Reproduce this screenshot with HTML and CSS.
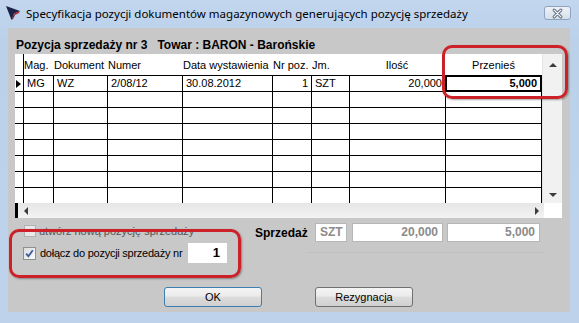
FILE: index.html
```html
<!DOCTYPE html>
<html lang="pl">
<head>
<meta charset="utf-8">
<title>Specyfikacja</title>
<link rel="stylesheet" href="styles.css">
</head>
<body>
<div class="window">
  <div class="titlebar">
    <svg class="app-icon" viewBox="0 0 16 16" width="16" height="16">
      <polygon points="1,1 15,6 9,8.5 6.5,15" fill="#1c2348"/>
      <polygon points="9,8.5 15,6 14,8 10,10" fill="#b3202a"/>
      <polygon points="9,8.5 6.5,15 8,14 10,10" fill="#7a1a2a"/>
    </svg>
    <span class="title">Specyfikacja pozycji dokumentów magazynowych generujących pozycję sprzedaży</span>
    <div class="close">
      <svg viewBox="0 0 26 13" width="26" height="13">
        <path d="M9.5 3 L16.5 10 M16.5 3 L9.5 10" stroke="#5d6b7d" stroke-width="3.2" stroke-linecap="round"/>
        <path d="M9.5 3 L16.5 10 M16.5 3 L9.5 10" stroke="#f4f6f9" stroke-width="1.4" stroke-linecap="round"/>
      </svg>
    </div>
  </div>
  <div class="client">
    <div class="caption">Pozycja sprzedaży nr 3&nbsp;&nbsp;&nbsp;Towar : BARON - Barońskie</div>
    <div class="grid">
      <div class="grid-main">
        <div class="cells">
          <div class="row head">
            <div class="c ind"></div>
            <div class="c mag">Mag.</div>
            <div class="c">Dokument</div>
            <div class="c">Numer</div>
            <div class="c">Data wystawienia</div>
            <div class="c">Nr poz.</div>
            <div class="c">Jm.</div>
            <div class="c center">Ilość</div>
            <div class="c center">Przenieś</div>
          </div>
          <div class="row data">
            <div class="c ind"><span class="pointer"></span></div>
            <div class="c">MG</div>
            <div class="c">WZ</div>
            <div class="c">2/08/12</div>
            <div class="c">30.08.2012</div>
            <div class="c right">1</div>
            <div class="c">SZT</div>
            <div class="c right">20,000</div>
            <div class="c right last focus">5,000</div>
          </div>
          <div class="row data"><div class="c ind"></div><div class="c"></div><div class="c"></div><div class="c"></div><div class="c"></div><div class="c"></div><div class="c"></div><div class="c"></div><div class="c last"></div></div>
          <div class="row data"><div class="c ind"></div><div class="c"></div><div class="c"></div><div class="c"></div><div class="c"></div><div class="c"></div><div class="c"></div><div class="c"></div><div class="c last"></div></div>
          <div class="row data"><div class="c ind"></div><div class="c"></div><div class="c"></div><div class="c"></div><div class="c"></div><div class="c"></div><div class="c"></div><div class="c"></div><div class="c last"></div></div>
          <div class="row data"><div class="c ind"></div><div class="c"></div><div class="c"></div><div class="c"></div><div class="c"></div><div class="c"></div><div class="c"></div><div class="c"></div><div class="c last"></div></div>
          <div class="row data"><div class="c ind"></div><div class="c"></div><div class="c"></div><div class="c"></div><div class="c"></div><div class="c"></div><div class="c"></div><div class="c"></div><div class="c last"></div></div>
          <div class="row data"><div class="c ind"></div><div class="c"></div><div class="c"></div><div class="c"></div><div class="c"></div><div class="c"></div><div class="c"></div><div class="c"></div><div class="c last"></div></div>
          <div class="row data"><div class="c ind"></div><div class="c"></div><div class="c"></div><div class="c"></div><div class="c"></div><div class="c"></div><div class="c"></div><div class="c"></div><div class="c last"></div></div>
        </div>
        <div class="vscroll">
          <span class="arrow up"></span>
          <span class="arrow down"></span>
        </div>
      </div>
      <div class="hscroll-row">
        <div class="hbar"></div>
        <div class="htrack">
          <span class="arrow left"></span>
          <span class="arrow rightarr"></span>
        </div>
        <div class="corner"></div>
      </div>
    </div>
    <div class="lower">
      <div class="options">
        <div class="opt opt1"><span class="cb disabled"></span><span class="opt-label">utwórz nową pozycję sprzedaży</span></div>
        <div class="opt opt2">
          <span class="cb checked">
            <svg viewBox="0 0 11 11" width="11" height="11"><path d="M2.2 5.6 L4.4 8.3 L8.8 2.2" fill="none" stroke="#3a5ba0" stroke-width="1.8"/></svg>
          </span>
          <span class="opt-label tight">dołącz do pozycji sprzedaży nr</span>
          <span class="num">1</span>
        </div>
      </div>
      <div class="summary">
        <div class="sum-row">
          <span class="sum-label">Sprzedaż</span>
          <span class="box b-jm">SZT</span>
          <span class="box b-q1">20,000</span>
          <span class="box b-q2">5,000</span>
        </div>
        <div class="sum-line"></div>
      </div>
    </div>
    <div class="buttons">
      <button class="btn default">OK</button>
      <button class="btn">Rezygnacja</button>
    </div>
  </div>
  <div class="highlight hl-top"></div>
  <div class="highlight hl-bottom"></div>
</div>
</body>
</html>
```

FILE: styles.css
```css
* { box-sizing: border-box; }
html, body { margin: 0; padding: 0; }
body {
  width: 579px;
  height: 323px;
  overflow: hidden;
  font-family: "Liberation Sans", Arial, sans-serif;
  font-size: 11px;
  color: #000;
  background: #bcd2ea;
}
.window {
  position: relative;
  width: 579px;
  height: 323px;
  background: linear-gradient(#c2d6ee, #bbd1ea 40px, #bed3eb);
  display: flex;
  flex-direction: column;
}
.titlebar {
  height: 28px;
  display: flex;
  align-items: center;
  padding: 0 8px 2px 5px;
}
.app-icon { flex: none; }
.title {
  margin-left: 5px;
  font-family: "Noto Sans", "Open Sans", sans-serif;
  font-size: 11.5px;
  color: #000;
  white-space: nowrap;
}
.close {
  margin-left: auto;
  width: 27px;
  height: 14px;
  border: 1px solid #8ea3bd;
  border-radius: 3px;
  background: linear-gradient(#eef2f7, #d6dfea);
  display: flex;
  align-items: center;
  justify-content: center;
}
.close svg { display: block; }
.client {
  margin: 0 9px 0 8px;
  height: 284px;
  background: #c8c8c8;
  padding-top: 10px;
}
.caption {
  height: 14px;
  line-height: 14px;
  padding-left: 8px;
  font-weight: bold;
  font-size: 12px;
  white-space: nowrap;
}
.grid {
  margin: 2px 0 0 7px;
  width: 547px;
  height: 164px;
  display: flex;
  flex-direction: column;
  background: #fff;
}
.grid-main { display: flex; height: 149px; }
.cells { width: 527px; }
.row {
  display: grid;
  grid-template-columns: 8px 30px 54px 75px 90px 39px 38px 96px 97px;
}
.c { white-space: nowrap; overflow: hidden; }
.head { height: 21px; }
.head .c { padding: 5px 0 0 1px; line-height: 13px; }
.head .mag { border-left: 1px solid #000; padding-left: 0; }
.head .center { text-align: center; padding-left: 0; }
.data { height: 16px; border-top: 1px solid #000; }
.data .c {
  border-left: 1px solid #000;
  line-height: 15px;
  padding: 0 3px;
}
.data .c.ind { border-left: 0; padding: 0; }
.data .c.last { border-right: 1px solid #000; }
.data .right { text-align: right; }
.data .focus {
  box-shadow: inset 0 0 0 1px #000;
  font-weight: bold;
  padding-right: 4px;
}
.pointer {
  display: block;
  width: 0;
  height: 0;
  margin: 4px 0 0 1px;
  border-left: 5px solid #000;
  border-top: 4px solid transparent;
  border-bottom: 4px solid transparent;
}
.vscroll {
  width: 20px;
  background: #f1f1f1;
  border-left: 1px solid #e4e4e4;
  display: flex;
  flex-direction: column;
  align-items: center;
  justify-content: space-between;
  padding: 9px 0 6px 1px;
}
.arrow { display: block; width: 0; height: 0; }
.arrow.up {
  border-bottom: 4px solid #3c3c3c;
  border-left: 4px solid transparent;
  border-right: 4px solid transparent;
}
.arrow.down {
  border-top: 4px solid #3c3c3c;
  border-left: 4px solid transparent;
  border-right: 4px solid transparent;
}
.hscroll-row { display: flex; height: 15px; }
.hbar { width: 3px; background: #000; }
.htrack {
  width: 526px;
  background: linear-gradient(#e6e6e6, #f3f3f3);
  display: flex;
  align-items: center;
  justify-content: space-between;
  padding: 0 5px 0 6px;
}
.arrow.left {
  border-right: 4px solid #3c3c3c;
  border-top: 4px solid transparent;
  border-bottom: 4px solid transparent;
}
.arrow.rightarr {
  border-left: 4px solid #3c3c3c;
  border-top: 4px solid transparent;
  border-bottom: 4px solid transparent;
}
.corner { width: 18px; background: #fff; }

.lower { display: flex; margin-top: 5px; height: 40px; }
.options {
  margin-left: 15px;
  width: 204px;
  display: flex;
  flex-direction: column;
}
.opt { display: flex; align-items: center; white-space: nowrap; }
.opt1 { height: 16px; color: #555555; padding-left: 1px; }
.opt2 { height: 20px; margin-top: 4px; }
.cb {
  flex: none;
  width: 13px;
  height: 13px;
  border: 1px solid #8e8f8f;
  background: linear-gradient(135deg, #dcdcdc, #fbfbfb);
  margin-right: 4px;
  display: flex;
  align-items: center;
  justify-content: center;
}
.cb.disabled { width: 12px; height: 12px; border-color: #b1b1b1; background: #e8e8e8; margin-right: 3px; }
.cb svg { display: block; }
.opt-label.tight { letter-spacing: -0.25px; flex: none; }
.num {
  margin-left: auto;
  flex: none;
  width: 39px;
  height: 20px;
  background: #fff;
  text-align: right;
  font-weight: bold;
  font-size: 13px;
  line-height: 20px;
  padding-right: 7px;
}
.summary { margin-left: 28px; display: flex; flex-direction: column; }
.sum-row { display: flex; align-items: center; height: 19px; }
.sum-label { width: 60px; font-weight: bold; font-size: 12px; }
.box {
  height: 19px;
  border: 1px solid #b7b7b7;
  background: #fff;
  color: #8b8b8b;
  font-weight: bold;
  font-size: 12px;
  line-height: 17px;
  padding: 0 4px;
}
.b-jm { width: 32px; }
.b-q1 { width: 91px; margin-left: 5px; text-align: right; }
.b-q2 { width: 93px; margin-left: 4px; text-align: right; }
.sum-line {
  margin: 10px 0 0 52px;
  width: 236px;
  height: 1px;
  background: #bec0c6;
}
.buttons {
  display: flex;
  gap: 53px;
  padding-left: 156px;
  margin-top: 24px;
}
.btn {
  width: 98px;
  height: 20px;
  margin: 0;
  padding: 0;
  font-family: "Liberation Sans", Arial, sans-serif;
  font-size: 11px;
  color: #000;
  border: 1px solid #707070;
  border-radius: 3px;
  background: linear-gradient(#f4f4f4 0%, #ebebeb 45%, #dddddd 50%, #cfcfcf 100%);
}
.btn.default { border-color: #3c7fb1; }
.highlight {
  position: absolute;
  border: 3px solid #cd2129;
  border-radius: 10px;
  box-shadow: 1px 1px 2px rgba(0, 0, 0, 0.35);
}
.hl-top { left: 442px; top: 45px; width: 126px; height: 54px; }
.hl-bottom { left: 9px; top: 229px; width: 232px; height: 49px; }
```
